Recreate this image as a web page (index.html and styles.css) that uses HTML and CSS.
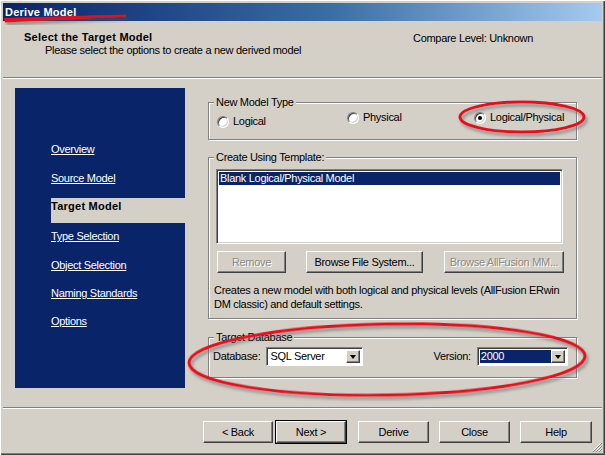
FILE: index.html
```html
<!DOCTYPE html>
<html>
<head>
<meta charset="utf-8">
<link rel="stylesheet" href="styles.css">
</head>
<body>
<div class="window">
  <div class="titlebar"><span class="title">Derive Model</span></div>
  <div class="header">
    <div class="header-text">
      <div class="h-title">Select the Target Model</div>
      <div class="h-sub">Please select the options to create a new derived model</div>
    </div>
    <div class="compare">Compare Level: Unknown</div>
  </div>
  <div class="main">
    <nav class="steps">
      <a class="step s-first">Overview</a>
      <a class="step">Source Model</a>
      <span class="step current">Target Model</span>
      <a class="step s-after">Type Selection</a>
      <a class="step">Object Selection</a>
      <a class="step s-tight">Naming Standards</a>
      <a class="step s-tight">Options</a>
    </nav>
    <div class="content">
      <fieldset class="group g-type">
        <legend>New Model Type</legend>
        <div class="radios">
          <label class="radio r-logical"><span class="dot"></span>Logical</label>
          <label class="radio"><span class="dot"></span>Physical</label>
          <label class="radio"><span class="dot on"></span>Logical/Physical</label>
        </div>
      </fieldset>
      <fieldset class="group g-template">
        <legend>Create Using Template:</legend>
        <div class="listbox">
          <div class="list-item sel">Blank Logical/Physical Model</div>
        </div>
        <div class="tpl-buttons">
          <button class="btn b-remove" disabled>Remove</button>
          <button class="btn b-browse">Browse File System...</button>
          <button class="btn b-mm" disabled>Browse AllFusion MM...</button>
        </div>
        <p class="desc">Creates a new model with both logical and physical levels (AllFusion ERwin DM classic) and default settings.</p>
      </fieldset>
      <fieldset class="group g-db">
        <legend>Target Database</legend>
        <div class="db-row">
          <span class="lbl">Database:</span>
          <div class="combo c-db"><span class="field">SQL Server</span><span class="drop"><span class="tri"></span></span></div>
          <span class="lbl l-ver">Version:</span>
          <div class="combo c-ver"><span class="field focus">2000</span><span class="drop"><span class="tri"></span></span></div>
        </div>
      </fieldset>
    </div>
  </div>
  <div class="footer">
    <button class="btn fb f-back">&lt; Back</button>
    <button class="btn fb default">Next &gt;</button>
    <button class="btn fb f-derive">Derive</button>
    <button class="btn fb f-close">Close</button>
    <button class="btn fb f-help">Help</button>
    <svg class="grip" width="10" height="10" viewBox="0 0 10 10"><path d="M9 1L1 9M9 4L4 9M9 7L7 9" stroke="#fff" stroke-width="1"/><path d="M10 1L1 10M10 4L4 10M10 7L7 10" stroke="#808080" stroke-width="1"/></svg>
  </div>
  <svg class="annot" width="605" height="455" viewBox="0 0 605 455">
    <defs>
      <filter id="sh" x="-10%" y="-30%" width="120%" height="160%">
        <feDropShadow dx="2" dy="3" stdDeviation="1.5" flood-color="#555" flood-opacity="0.55"/>
      </filter>
    </defs>
    <path d="M4 18 C40 17 90 15.5 126 14.5 L126 16.8 C90 18.5 40 20.8 5 22.5 Z" fill="#e8101c" filter="url(#sh)"/>
    <ellipse cx="522" cy="117" rx="62" ry="15" fill="none" stroke="#e8101c" stroke-width="3" filter="url(#sh)"/>
    <ellipse cx="387" cy="359.5" rx="198" ry="35.5" fill="none" stroke="#e8101c" stroke-width="3" transform="rotate(-1 387 359)" filter="url(#sh)"/>
  </svg>
</div>
</body>
</html>
```
FILE: styles.css
```css
* { box-sizing: border-box; }
html, body { margin: 0; padding: 0; }
body {
  width: 605px; height: 455px; overflow: hidden;
  font-family: "Liberation Sans", "DejaVu Sans", sans-serif;
  font-size: 11px; letter-spacing: -0.3px; color: #000; background: #d4d0c8;
}
.window {
  position: relative;
  width: 605px; height: 455px;
  padding: 3px;
  background: #d4d0c8;
  display: flex; flex-direction: column;
  box-shadow: inset 1px 1px #fff, inset -1px -1px #404040, inset -2px -2px #808080;
}
.titlebar {
  height: 18px; flex: none;
  background: linear-gradient(to right, #0a246a 0%, #3a6ea5 55%, #a6caf0 100%);
  display: flex; align-items: center; padding-left: 2px;
}
.title { color: #fff; font-weight: bold; font-size: 11px; letter-spacing: 0.25px; }
.header {
  height: 57px; flex: none;
  display: grid; grid-template-columns: 389px auto;
  padding: 10px 0 0 21px;
  border-bottom: 1px solid #808080;
  box-shadow: 0 1px #fff;
}
.h-title { font-weight: bold; line-height: 13px; letter-spacing: 0.25px; }
.h-sub { line-height: 13px; padding-left: 21px; }
.compare { line-height: 13px; padding-top: 1px; }
.main {
  height: 329px; flex: none;
  display: flex; padding: 10px 0 0 12px;
}
.steps {
  width: 170px; height: 300px; flex: none;
  background: #0a246a;
  display: flex; flex-direction: column;
  padding-top: 55px;
}
.step {
  color: #fff; text-decoration: underline; line-height: 13px;
  margin: 16px 0 0 36px; align-self: flex-start;
}
.s-first { margin-top: 0; }
.step.current {
  align-self: stretch; text-decoration: none; color: #000; font-weight: bold;
  letter-spacing: 0.25px;
  background: #d4d0c8; padding: 2px 0 10px 0; margin-top: 13px;
}
.step.s-after { margin-top: 7px; }
.step.s-tight { margin-top: 15px; }
.content {
  width: 369px; margin-left: 23px; padding-top: 8px;
  display: flex; flex-direction: column;
}
.group {
  margin: 0; padding: 0;
  border: 1px solid #808080;
  box-shadow: inset 1px 1px #fff, 1px 1px #fff;
}
.group legend {
  padding: 0 2px; margin-left: 5px; line-height: 13px;
  background: #d4d0c8;
}
.g-type { height: 44px; }
.radios {
  display: grid; grid-template-columns: 130px 127px auto;
  padding: 2px 0 0 8px; align-items: start;
}
.radio { display: flex; align-items: center; gap: 4px; line-height: 13px; }
.r-logical { margin-top: 4px; }
.dot {
  width: 12px; height: 12px; border-radius: 50%; flex: none;
  background: #fff;
  border: 1px solid; border-color: #808080 #fff #fff #808080;
  box-shadow: inset 1px 1px #404040, inset -1px -1px #d4d0c8;
  position: relative;
}
.dot.on::after {
  content: ""; position: absolute; left: 3px; top: 3px;
  width: 4px; height: 4px; border-radius: 50%; background: #000;
}
.g-template { height: 168px; margin-top: 11px; }
.listbox {
  margin: 5px 0 0 7px; width: 347px; height: 75px;
  background: #fff;
  border: 1px solid; border-color: #808080 #fff #fff #808080;
  box-shadow: inset 1px 1px #404040, inset -1px -1px #d4d0c8;
  padding: 2px;
}
.list-item { line-height: 13px; padding-left: 1px; }
.list-item.sel { background: #0a246a; color: #fff; }
.tpl-buttons { display: flex; margin: 7px 0 0 8px; }
.btn {
  font: inherit; letter-spacing: inherit; color: #000;
  height: 22px; padding: 0;
  background: #d4d0c8;
  border: 1px solid; border-color: #fff #404040 #404040 #fff;
  box-shadow: inset -1px -1px #808080;
}
.btn:disabled { color: #8d8a85; text-shadow: 1px 1px #fff; }
.b-remove { width: 69px; }
.b-browse { width: 117px; margin-left: 20px; }
.b-mm { width: 120px; margin-left: 21px; }
.desc { margin: 10px 0 0 5px; line-height: 14px; width: 352px; }
.g-db { height: 47px; margin-top: 12px; }
.db-row { display: flex; align-items: center; padding: 3px 0 0 4px; }
.lbl { line-height: 13px; }
.combo {
  height: 19px; display: flex; background: #fff;
  border: 1px solid; border-color: #808080 #fff #fff #808080;
  box-shadow: inset 1px 1px #404040;
  padding: 2px;
}
.c-db { width: 97px; margin-left: 6px; }
.l-ver { margin-left: 70px; }
.c-ver { width: 91px; margin-left: 6px; }
.field { flex: 1; line-height: 13px; padding-left: 1px; }
.field.focus { background: #0a246a; color: #fff; }
.drop {
  width: 14px; flex: none; background: #d4d0c8;
  border: 1px solid; border-color: #fff #404040 #404040 #fff;
  box-shadow: inset -1px -1px #808080;
  display: flex; align-items: center; justify-content: center;
}
.tri {
  width: 0; height: 0;
  border-left: 3.5px solid transparent; border-right: 3.5px solid transparent;
  border-top: 4px solid #000;
}
.footer {
  flex: 1; position: relative;
  border-top: 1px solid #808080;
  box-shadow: inset 0 1px #fff;
  display: flex; justify-content: flex-end; align-items: flex-start;
  padding: 13px 10px 0 0;
}
.f-back { width: 70px; }
.fb.default { margin-left: 3px; width: 70px; box-shadow: 0 0 0 1px #000, inset -1px -1px #808080; }
.f-derive { width: 71px; margin-left: 12px; }
.f-close { width: 71px; margin-left: 10px; }
.f-help { width: 72px; margin-left: 10px; }
.grip { position: absolute; right: 0; bottom: 0; }
.annot { position: absolute; left: 0; top: 0; pointer-events: none; }
```
